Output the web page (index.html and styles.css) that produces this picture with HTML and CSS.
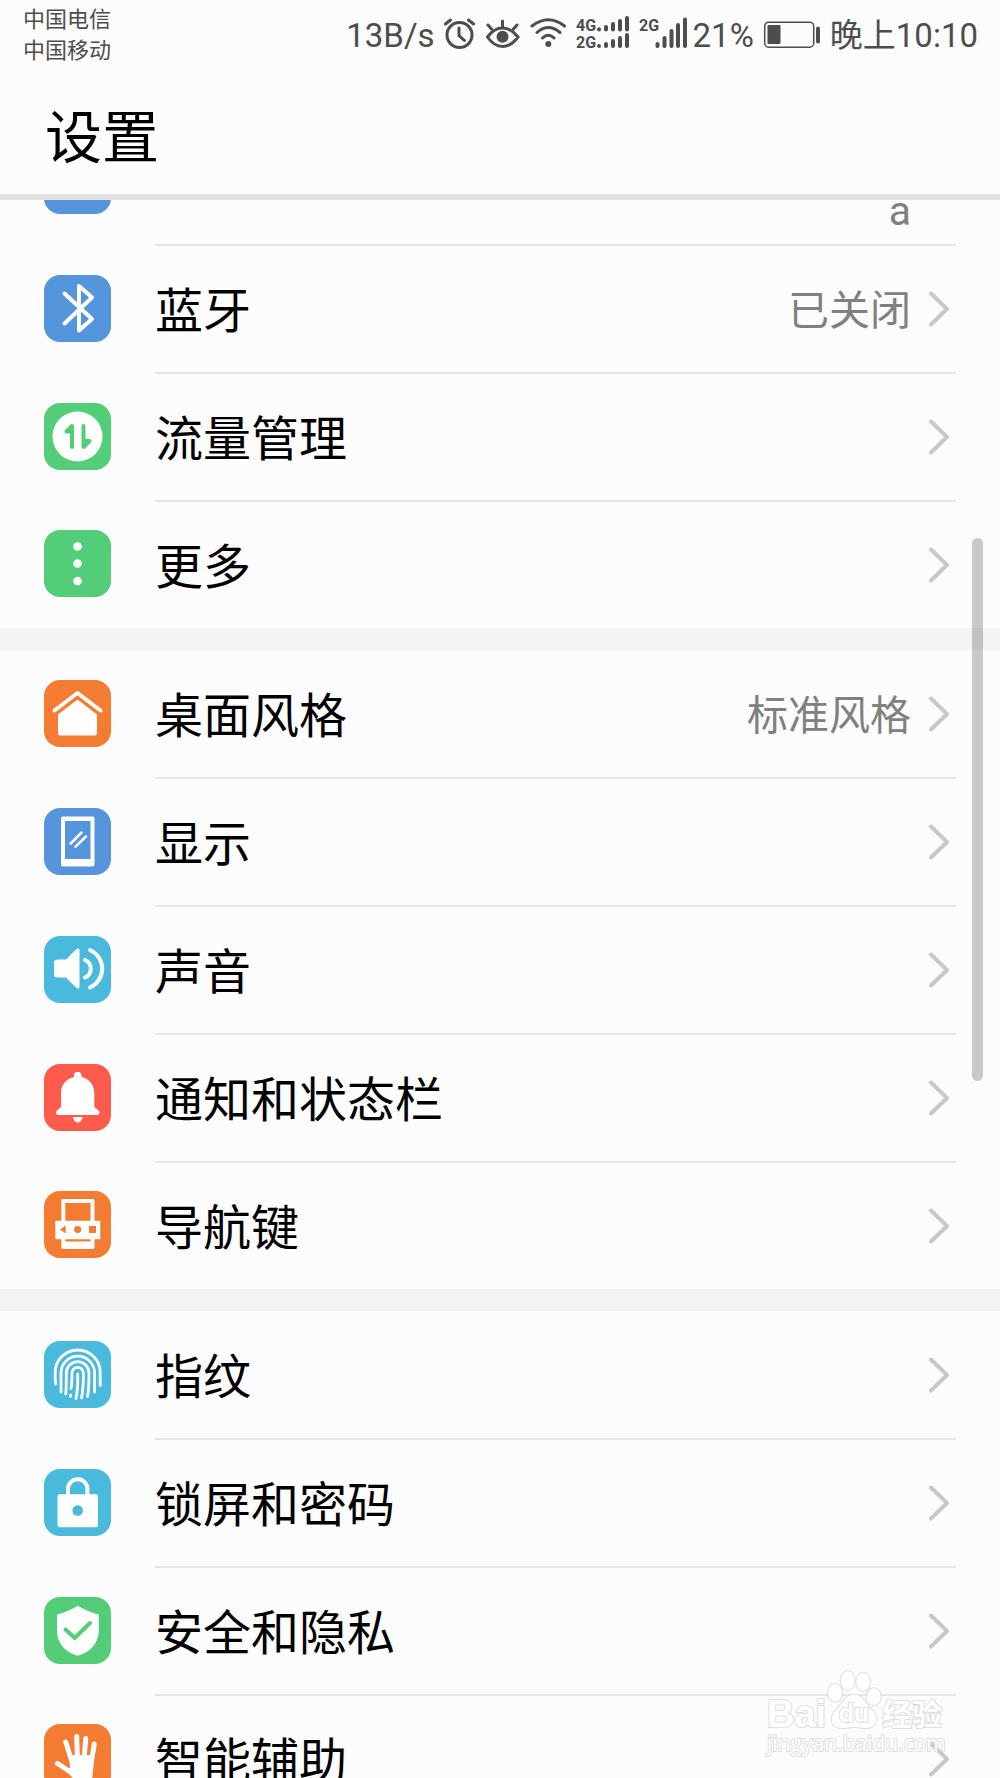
FILE: index.html
```html
<!DOCTYPE html>
<html lang="zh-CN">

<head>
    <meta charset="UTF-8">
    <meta name="viewport" content="width=device-width, initial-scale=1.0">
    <title>设置</title>
    <link rel="stylesheet" href="styles.css">
</head>

<body>
    <!-- shared arrow for every row -->
    <svg class="defs" aria-hidden="true">
        <symbol id="arrow" viewBox="0 0 20 36">
            <path d="M2 2.500L18 18L2 33.500" fill="none" stroke="#c8c8c8" stroke-width="4" stroke-linecap="round" stroke-linejoin="round" />
        </symbol>
    </svg>

    <header>
        <div class="status-bar">
            <div class="carriers">
                <span>中国电信</span>
                <span>中国移动</span>
            </div>
            <div class="status">
                <div class="indicators">
                    <span>13B/s</span>
                    <svg width="32" height="38" viewBox="0 15 32 38" class="line">
                        <circle cx="15.500" cy="35" r="12.500" />
                        <path d="M15 28V35.500L20.500 40.500M1.500 24L6.500 20M24.500 20L29.500 24" />
                    </svg>
                    <svg width="36" height="38" viewBox="0 15 36 38" class="line">
                        <path d="M2.500 37Q9 28 17.500 28T33 37Q26 46.500 17.500 46.500T2.500 37ZM3 25L6.500 29M17.500 21V27M32 25L28.500 29" />
                        <circle cx="17.500" cy="36.700" r="4.500" class="solid" />
                    </svg>
                    <svg width="37" height="38" viewBox="0 15 37 38" class="line">
                        <path d="M2 26Q18.300 13.500 34.500 26M7 32.500Q18.300 22.500 30 32.500M12.500 38Q18.300 32.500 24 38" />
                        <circle cx="18.300" cy="44" r="1.500" class="solid" />
                    </svg>
                    <svg width="54" height="38" viewBox="0 15 54 38">
                        <text x="0" y="31" class="net">4G</text>
                        <text x="0" y="48" class="net">2G</text>
                        <path class="bars" d="M23 29.300V29.400M30 27V29.400M37 24V29.400M44 21V29.400M51 18V29.400M23 46V46.100M30 44V46.100M37 41V46.100M44 38V46.100M51 35V46.100" />
                    </svg>
                    <svg width="49" height="38" viewBox="0 15 49 38">
                        <text x="0" y="31" class="net">2G</text>
                        <path class="bars" d="M18.500 44V46.100M25.500 38V46.100M32.500 31V46.100M39 25V46.100M46 19.500V46.100" />
                    </svg>
                </div>
                <div class="indicators">
                    <span>21%</span>
                    <svg width="58" height="38" viewBox="0 15 58 38">
                        <rect x="1.700" y="22.200" width="49" height="25" rx="4" fill="none" stroke="#4d4d4d" stroke-width="1.500" />
                        <rect x="4.500" y="25" width="13" height="19" rx="1" fill="#4d4d4d" />
                        <rect x="53" y="26.500" width="4" height="17" rx="2" fill="#4d4d4d" />
                    </svg>
                    <span>晚上10:10</span>
                </div>
            </div>
        </div>
        <h1>设置</h1>
    </header>

    <main>
        <ul class="group scrolled">
            <li>
                <a href="#" class="row">
                    <span class="icon blue"></span>
                    <span class="content">
                        <span class="value last-line">a</span>
                        <svg class="arrow"><use href="#arrow" /></svg>
                    </span>
                </a>
            </li>
            <li>
                <a href="#" class="row">
                    <svg class="icon blue" viewBox="0 0 67 67">
                        <path d="M20.500 18.500L48 44L35 55.500V11L48 22.500L20.500 48.500" fill="none" stroke="#fff" stroke-width="4" stroke-linecap="round" stroke-linejoin="round" />
                    </svg>
                    <span class="content">
                        <span class="label">蓝牙</span>
                        <span class="value">已关闭</span>
                        <svg class="arrow"><use href="#arrow" /></svg>
                    </span>
                </a>
            </li>
            <li>
                <a href="#" class="row">
                    <svg class="icon green" viewBox="0 0 67 67">
                        <circle cx="33.500" cy="33.500" r="25" fill="#fff" />
                        <path d="M28 44V23L22.500 28.500H28M39.500 23V44L45.500 38H39.500" fill="#54cd79" stroke="#54cd79" stroke-width="4" stroke-linecap="round" stroke-linejoin="round" />
                    </svg>
                    <span class="content">
                        <span class="label">流量管理</span>
                        <svg class="arrow"><use href="#arrow" /></svg>
                    </span>
                </a>
            </li>
            <li>
                <a href="#" class="row">
                    <svg class="icon green" viewBox="0 0 67 67" fill="#fff">
                        <circle cx="33.500" cy="16.500" r="4.300" />
                        <circle cx="33.500" cy="33.500" r="4.300" />
                        <circle cx="33.500" cy="51" r="4.300" />
                    </svg>
                    <span class="content">
                        <span class="label">更多</span>
                        <svg class="arrow"><use href="#arrow" /></svg>
                    </span>
                </a>
            </li>
        </ul>

        <ul class="group">
            <li>
                <a href="#" class="row">
                    <svg class="icon orange" viewBox="0 0 67 67">
                        <path d="M10.500 30.500L33.500 13L56.500 30.500" fill="none" stroke="#fff" stroke-width="4" stroke-linecap="round" stroke-linejoin="round" />
                        <path d="M33.500 19.500L53 34.500V53Q53 55.500 50.500 55.500H16.500Q14 55.500 14 53V34.500Z" fill="#fff" />
                    </svg>
                    <span class="content">
                        <span class="label">桌面风格</span>
                        <span class="value">标准风格</span>
                        <svg class="arrow"><use href="#arrow" /></svg>
                    </span>
                </a>
            </li>
            <li>
                <a href="#" class="row">
                    <svg class="icon blue" viewBox="0 0 67 67">
                        <path d="M19 8.500H48.500Q50.500 8.500 50.500 10.500V56.500Q50.500 58.500 48.500 58.500H19Q17 58.500 17 56.500V10.500Q17 8.500 19 8.500ZM21 13V51H46.500V13Z" fill="#fff" fill-rule="evenodd" />
                        <path d="M26.700 35.500L37.500 24.700M31.500 38.700L42 28.300" stroke="#fff" stroke-width="2.600" stroke-linecap="round" />
                    </svg>
                    <span class="content">
                        <span class="label">显示</span>
                        <svg class="arrow"><use href="#arrow" /></svg>
                    </span>
                </a>
            </li>
            <li>
                <a href="#" class="row">
                    <svg class="icon cyan" viewBox="0 0 67 67">
                        <path d="M10 27Q10 23.500 13.500 23.500H22L32.500 13Q35.500 11.500 35.500 14V51Q35.500 53.500 32.500 52L22 41.500H13.500Q10 41.500 10 38Z" fill="#fff" />
                        <path d="M41 24A9.500 9.500 0 0 1 41 41.500M46 14A20.500 20.500 0 0 1 46 51.500" fill="none" stroke="#fff" stroke-width="4" stroke-linecap="round" />
                    </svg>
                    <span class="content">
                        <span class="label">声音</span>
                        <svg class="arrow"><use href="#arrow" /></svg>
                    </span>
                </a>
            </li>
            <li>
                <a href="#" class="row">
                    <svg class="icon red" viewBox="0 0 67 67" fill="#fff">
                        <path d="M30 13V11.500A3.700 3.700 0 0 1 37.400 11.500V13C45 14.500 50.300 21 50.300 29V43L54.500 46.500C56.500 48.500 55 51 53 51H14.500C12 51 11 48.500 13 46.500L17 43V29C17 21 22.500 14.500 30 13Z" />
                        <path d="M29 53H38.700Q37.500 58.500 33.800 58.500T29 53Z" />
                    </svg>
                    <span class="content">
                        <span class="label">通知和状态栏</span>
                        <svg class="arrow"><use href="#arrow" /></svg>
                    </span>
                </a>
            </li>
            <li>
                <a href="#" class="row">
                    <svg class="icon orange" viewBox="0 0 67 67">
                        <path d="M19.300 8H48.500Q50.500 8 50.500 10V56Q50.500 58 48.500 58H19.300Q17.300 58 17.300 56V10Q17.300 8 19.300 8ZM21.300 12V50.500H46.500V12Z" fill="#fff" fill-rule="evenodd" />
                        <rect x="11.300" y="29.700" width="45" height="18.500" rx="1" fill="#fff" />
                        <path d="M16 38.500L21.700 34.500V42.500ZM45 35H52V42H45Z" fill="#f37b32" />
                        <circle cx="33.700" cy="38.500" r="3.600" fill="#f37b32" />
                    </svg>
                    <span class="content">
                        <span class="label">导航键</span>
                        <svg class="arrow"><use href="#arrow" /></svg>
                    </span>
                </a>
            </li>
        </ul>

        <ul class="group">
            <li>
                <a href="#" class="row">
                    <svg class="icon cyan" viewBox="0 0 67 67">
                        <path d="M11.700 43C11 38 11 35 11.200 31.500A22.500 22.500 0 0 1 56.200 31.500V44.500M17 51V32A16.800 16.800 0 0 1 50.600 32V51M21.700 53C22.500 46 22.300 40 22.300 32A11.300 11.300 0 0 1 45 32C45 40 45 48 43.500 55.500M27 47.500C28 42 28 38 28 32A5.700 5.700 0 0 1 39.400 32C39.500 42 39 50 37.500 57M26.700 54L26.400 55.500M33.700 33C34 42 33.500 50 32 57.500" fill="none" stroke="#fff" stroke-width="2.800" stroke-linecap="round" />
                    </svg>
                    <span class="content">
                        <span class="label">指纹</span>
                        <svg class="arrow"><use href="#arrow" /></svg>
                    </span>
                </a>
            </li>
            <li>
                <a href="#" class="row">
                    <svg class="icon cyan" viewBox="0 0 67 67">
                        <path d="M24 27V20A9.700 9.700 0 0 1 43.400 20V27" fill="none" stroke="#fff" stroke-width="4" />
                        <rect x="13.500" y="25.300" width="40.500" height="33" rx="2" fill="#fff" />
                        <circle cx="33.700" cy="41.500" r="5.300" fill="#49badb" />
                    </svg>
                    <span class="content">
                        <span class="label">锁屏和密码</span>
                        <svg class="arrow"><use href="#arrow" /></svg>
                    </span>
                </a>
            </li>
            <li>
                <a href="#" class="row">
                    <svg class="icon green" viewBox="0 0 67 67">
                        <path d="M33.700 8.700Q43 14.500 54.700 17.500V34C54.700 46 46 55.500 33.700 58.700C21.500 55.500 13 46 13 34V17.500Q24.500 14.500 33.700 8.700Z" fill="#fff" />
                        <path d="M21.500 32.500L30.700 41L46 26" fill="none" stroke="#54cd79" stroke-width="4" stroke-linecap="round" />
                    </svg>
                    <span class="content">
                        <span class="label">安全和隐私</span>
                        <svg class="arrow"><use href="#arrow" /></svg>
                    </span>
                </a>
            </li>
            <li>
                <a href="#" class="row">
                    <svg class="icon orange" viewBox="0 0 67 67">
                        <path d="M21.700 18L27.500 36M32.700 12.500L33.500 36M41.700 14.500L40 36M50.300 20L47 40M13.500 39.500L28 49" stroke="#fff" stroke-width="5" stroke-linecap="round" />
                        <path d="M25 31H48.500L50 36L48 58H32L22 46.500L26 44Z" fill="#fff" />
                    </svg>
                    <span class="content">
                        <span class="label">智能辅助</span>
                        <svg class="arrow"><use href="#arrow" /></svg>
                    </span>
                </a>
            </li>
        </ul>

        <div class="scrollbar"></div>

        <svg class="watermark" width="182" height="92" viewBox="0 0 182 92">
            <text x="2" y="57" class="brand">Bai</text>
            <ellipse cx="70" cy="23" rx="7" ry="9" />
            <ellipse cx="82.700" cy="10.700" rx="7" ry="9.500" />
            <ellipse cx="98.300" cy="11.700" rx="7" ry="9" />
            <ellipse cx="108.700" cy="26.700" rx="7" ry="8.500" />
            <path d="M89 24.500C98 24.500 101 35 107 40C114 47 113 58 101 58C96 58 94 57 89 57C84 57 82 58 77 58C65 58 64 47 71 40C77 35 80 24.500 89 24.500Z" />
            <text x="89" y="52" class="du">du</text>
            <text x="117" y="55" class="jingyan">经验</text>
            <text x="2" y="81" class="url">jingyan.baidu.com</text>
        </svg>
    </main>
</body>

</html>
```
FILE: styles.css
```css
:root {
    --bg: #fcfcfc;
    --dark: #4d4d4d;
    --grey: #808080;
    --line: #e6e6e6;
    --blue: #5595db;
    --green: #54cd79;
    --orange: #f37b32;
    --cyan: #49badb;
    --red: #fe5b4c;
}

* {
    box-sizing: border-box;
}

body {
    display: flex;
    flex-direction: column;
    height: 100vh;
    margin: 0;
    overflow: hidden;
    background-color: var(--bg);
    color: #000;
    font-family: Roboto, "Noto Sans CJK SC", sans-serif;
}

.defs {
    display: none;
}

header {
    flex: none;
    border-bottom: 6px solid #e1e1e1;
}

.status-bar {
    display: flex;
    justify-content: space-between;
    height: 68px;
    padding: 0 22px 0 23px;
    color: var(--dark);
}

.carriers {
    display: flex;
    flex-direction: column;
    padding-top: 4px;
    font-size: 22px;
    line-height: 31px;
}

.status {
    display: flex;
    gap: 5px;
    font-size: 33px;
    line-height: 40px;
}

.indicators {
    display: flex;
    align-items: center;
    gap: 9px;
}

.indicators span {
    padding-top: 3px;
}

.indicators svg {
    flex: none;
}

.line {
    fill: none;
    stroke: var(--dark);
    stroke-width: 3;
    stroke-linecap: round;
}

.solid {
    fill: var(--dark);
}

.net {
    fill: var(--dark);
    font-family: Roboto, sans-serif;
    font-size: 16px;
    font-weight: bold;
}

.bars {
    stroke: var(--dark);
    stroke-width: 4;
    stroke-linecap: round;
}

h1 {
    margin: 0;
    padding: 29px 45px 13px;
    font-size: 57px;
    font-weight: normal;
    line-height: 84px;
}

main {
    position: relative;
    flex: 1;
    min-height: 0;
    overflow: hidden;
}

.group {
    margin: 0;
    padding: 1px 0 0;
    list-style: none;
}

.group + .group {
    border-top: 22px solid #f3f3f3;
}

/* list is scrolled, the first row is partly under the header */
.scrolled {
    margin-top: -83px;
}

.row {
    display: flex;
    align-items: center;
    gap: 44px;
    padding: 0 44px;
    color: inherit;
    text-decoration: none;
}

.icon {
    flex: none;
    width: 67px;
    height: 67px;
    margin-bottom: 3px;
    border-radius: 16px;
}

.blue {
    background-color: var(--blue);
}

.green {
    background-color: var(--green);
}

.orange {
    background-color: var(--orange);
}

.cyan {
    background-color: var(--cyan);
}

.red {
    background-color: var(--red);
}

.content {
    display: flex;
    flex: 1;
    align-items: center;
    height: 128px;
    padding-right: 7px;
    border-bottom: 2px solid var(--line);
}

li:last-child .content {
    height: 126px;
    border-bottom: none;
}

.label {
    padding-top: 6px;
    font-size: 48px;
    line-height: 72px;
}

.value {
    margin-left: auto;
    padding-top: 4px;
    color: var(--grey);
    font-size: 41px;
    line-height: 56px;
}

.last-line {
    align-self: flex-end;
    padding-bottom: 5px;
}

.arrow {
    flex: none;
    width: 20px;
    height: 36px;
    margin-left: auto;
}

.value + .arrow {
    margin-left: 18px;
}

.scrollbar {
    position: absolute;
    top: 21.4%;
    right: 17px;
    width: 11px;
    height: 34.4%;
    border-radius: 6px;
    background-color: rgba(0, 0, 0, 0.2);
}

.watermark {
    position: absolute;
    right: 53px;
    bottom: 16px;
    fill: #fff;
    stroke: #dedede;
    stroke-width: 2;
    paint-order: stroke;
}

.brand {
    font: bold 38px "Liberation Sans", sans-serif;
}

.du {
    font: bold 25px "Liberation Sans", sans-serif;
    text-anchor: middle;
}

.jingyan {
    font: bold 30px "Noto Sans CJK SC", sans-serif;
}

.url {
    font: 21px "Open Sans", sans-serif;
}
```
